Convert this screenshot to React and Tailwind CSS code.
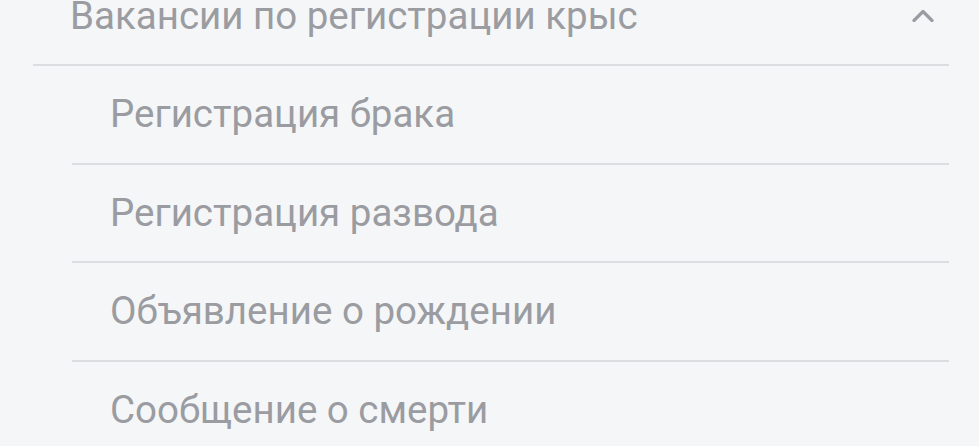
import React from "react";

const items = [
  "Регистрация брака",
  "Регистрация развода",
  "Объявление о рождении",
  "Сообщение о смерти",
];

export default function App() {
  return (
    <div
      className="w-[979px] h-[446px] overflow-hidden bg-[#f5f6f8] text-[#9a9ca1]"
      style={{ fontFamily: "Roboto, 'Noto Sans', sans-serif" }}
    >
      <div className="ml-[33px] mr-[30px]">
        <div className="-mt-[31px] h-[97px] flex items-center justify-between border-b-2 border-[#dcdde0] pl-[37px] pr-[15px]">
          <span className="text-[38.5px] leading-none">Вакансии по регистрации крыс</span>
          <svg width="22" height="13" viewBox="0 0 22 13" fill="none" className="-mt-[3px]">
            <path d="M2 11.5 L11 2.5 L20 11.5" stroke="#9a9ca1" strokeWidth="3.2" strokeLinecap="round" strokeLinejoin="round" />
          </svg>
        </div>
        <div className="ml-[39px]">
          {items.map((t) => (
            <div
              key={t}
              className="h-[98.6px] flex items-center border-b-2 border-[#dcdde0] pl-[38px]"
            >
              <span className="text-[38.5px] leading-none">{t}</span>
            </div>
          ))}
        </div>
      </div>
    </div>
  );
}
